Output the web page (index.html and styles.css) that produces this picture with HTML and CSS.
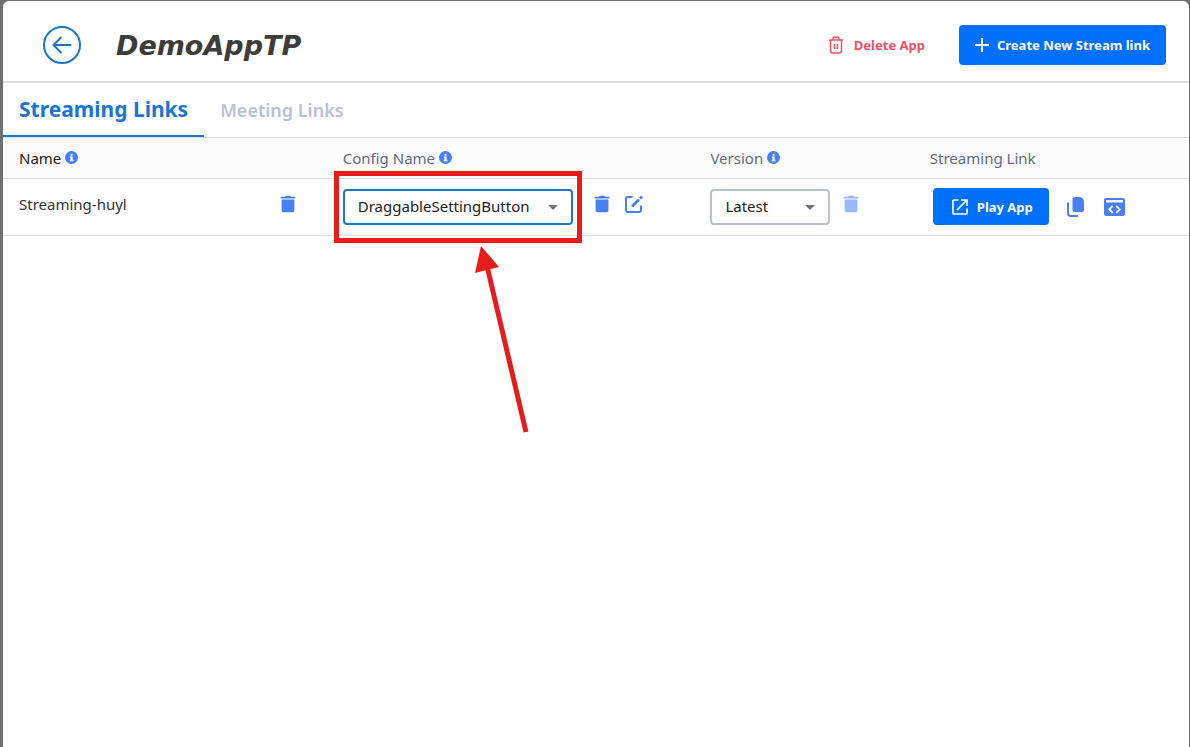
FILE: index.html
```html
<!DOCTYPE html>
<html lang="en">
<head>
  <meta charset="UTF-8" />
  <meta name="viewport" content="width=device-width, initial-scale=1">
  <title>DemoAppTP</title>
  <link rel="stylesheet" href="styles.css">
</head>
<body>
  <!-- shared icons -->
  <svg class="sprite" aria-hidden="true">
    <symbol id="info" viewBox="0 0 24 24">
      <path fill-rule="evenodd" d="M12 0a12 12 0 1 0 0 24a12 12 0 0 0 0-24zM10.3 5h3.6v3.6h-3.6zM9 10.3h5v6h1.5v2.4H8.6v-2.4h1.6v-3.6H9z"/>
    </symbol>
    <symbol id="trash" viewBox="0 0 24 24">
      <path d="M5 19c0 1.100.900 2 2 2h10c1.100 0 2-.9 2-2V7H5v12zM20 4h-4.500l-1-1h-5l-1 1H4v2h16V4z"/>
    </symbol>
  </svg>

  <div class="dialog">
    <header class="top">
      <button type="button" class="back" aria-label="Back">
        <svg width="38" height="38" viewBox="0 0 38 38" fill="none" stroke="currentColor" stroke-width="2" stroke-linecap="round" stroke-linejoin="round">
          <circle cx="19" cy="19" r="18"/>
          <path d="M27.500 19H10.500M18 11.500L10.500 19L18 26.500"/>
        </svg>
      </button>
      <h1>DemoAppTP</h1>
      <button type="button" class="delete-app">
        <svg width="16" height="18" viewBox="0 0 16 18" fill="none" stroke="currentColor" stroke-width="1.500">
          <path d="M1 4h14M5 4V2.500Q5 1 6.500 1h3Q11 1 11 2.500V4M2.500 4v10.500Q2.500 17 5 17h6q2.500 0 2.500-2.500V4M6.600 8v5M9.400 8v5"/>
        </svg>
        Delete App
      </button>
      <button type="button" class="primary create">
        <svg width="14" height="14" viewBox="0 0 14 14" fill="none" stroke="currentColor" stroke-width="2">
          <path d="M7 0v14M0 7h14"/>
        </svg>
        Create New Stream link
      </button>
    </header>

    <nav class="tabs">
      <a href="#streaming" class="tab active">Streaming Links</a>
      <a href="#meeting" class="tab">Meeting Links</a>
    </nav>

    <table class="links" id="streaming">
      <thead>
        <tr>
          <th class="col-name sorted"><span class="head">Name <svg class="info"><use href="#info"/></svg></span></th>
          <th class="col-config"><span class="head">Config Name <svg class="info"><use href="#info"/></svg></span></th>
          <th class="col-version"><span class="head">Version <svg class="info"><use href="#info"/></svg></span></th>
          <th><span class="head">Streaming Link</span></th>
        </tr>
      </thead>
      <tbody>
        <tr>
          <td>
            <div class="cell name-cell">
              <span>Streaming-huyl</span>
              <button type="button" class="icon" aria-label="Delete link"><svg width="22" height="24"><use href="#trash"/></svg></button>
            </div>
          </td>
          <td>
            <div class="cell">
              <div class="select config focused">
                <select aria-label="Config name">
                  <option>DraggableSettingButton</option>
                </select>
                <svg class="caret" viewBox="0 0 10 5"><path d="M0 0h10L5 5z"/></svg>
                <div class="highlight"></div>
                <svg class="arrow" width="54" height="188" viewBox="0 0 54 188">
                  <path d="M12 20L51 186" stroke="currentColor" stroke-width="5"/>
                  <path d="M6 0L24 21L0 27z" fill="currentColor"/>
                </svg>
              </div>
              <button type="button" class="icon trash-config" aria-label="Delete config"><svg width="22" height="24"><use href="#trash"/></svg></button>
              <button type="button" class="icon" aria-label="Edit config">
                <svg class="edit" width="18" height="18" viewBox="0 0 18 18" fill="none" stroke="currentColor" stroke-width="2">
                  <path d="M7.500 2H3Q1 2 1 4v11q0 2 2 2h11q2 0 2-2v-4.500"/>
                  <path d="M7 11.500L14 4.500M15 3.500L17 1.500" stroke-width="2.800"/>
                </svg>
              </button>
            </div>
          </td>
          <td>
            <div class="cell">
              <div class="select version">
                <select aria-label="Version">
                  <option>Latest</option>
                </select>
                <svg class="caret" viewBox="0 0 10 5"><path d="M0 0h10L5 5z"/></svg>
              </div>
              <button type="button" class="icon trash-version" aria-label="Delete version" disabled><svg width="22" height="24"><use href="#trash"/></svg></button>
            </div>
          </td>
          <td>
            <div class="cell link-cell">
              <button type="button" class="primary play">
                <svg width="16" height="16" viewBox="0 0 16 16" fill="none" stroke="currentColor" stroke-width="1.700">
                  <path d="M6.500 1H2Q1 1 1 2v12q0 1 1 1h12q1 0 1-1V9.500M9 1h6v6M15 1L5 11"/>
                </svg>
                Play App
              </button>
              <button type="button" class="icon copy" aria-label="Copy link">
                <svg width="18" height="20" viewBox="0 0 18 20">
                  <path d="M8 0h4.500Q17 .5 17 5v8q0 2-2 2H8q-2.500 0-2.500-2V2Q5.500 0 8 0z"/>
                  <path d="M1 5.500v10.700Q1 19 3.800 19H11" fill="none" stroke="currentColor" stroke-width="2"/>
                </svg>
              </button>
              <button type="button" class="icon" aria-label="Embed code">
                <svg width="21" height="18" viewBox="0 0 21 18">
                  <path fill-rule="evenodd" d="M2 0h17q2 0 2 2v14q0 2-2 2H2q-2 0-2-2V2Q0 0 2 0zM2 2v2.500h17V2z"/>
                  <path d="M8.700 8L5.300 11.400L8.700 14.800M12.300 8l3.400 3.400L12.300 14.800" fill="none" stroke="#fff" stroke-width="1.800"/>
                </svg>
              </button>
            </div>
          </td>
        </tr>
      </tbody>
    </table>
  </div>
</body>
</html>
```

FILE: styles.css
```css
:root {
  --blue: #1976d2;
  --primary: #0070ff;
  --icon: #4880f3;
  --line: #e0e0e0;
  --mark: #e81b1b;
}

* {
  box-sizing: border-box;
}

body {
  margin: 0;
  padding: 1px 1px 0 3px;
  background: #707070;
  font-family: "Noto Sans", sans-serif;
  font-size: 15px;
  color: #333;
}

.sprite {
  position: absolute;
  width: 0;
  height: 0;
}

.dialog {
  min-height: calc(100vh - 1px);
  background: #fff;
  border-radius: 6px 6px 0 0;
}

button, select {
  font: inherit;
}

button {
  display: flex;
  align-items: center;
  padding: 0;
  border: none;
  background: none;
  cursor: pointer;
}

/* header */
.top {
  display: flex;
  align-items: center;
  height: 82px;
  padding: 8px 23px 0 40px;
  border-bottom: 2px solid var(--line);
}

.back {
  color: var(--blue);
}

h1 {
  flex: 1;
  margin: 0 0 0 35px;
  font-family: "DejaVu Sans", sans-serif;
  font-size: 27px;
  font-style: italic;
  color: #3c3c3a;
}

.delete-app {
  gap: 10px;
  margin-right: 34px;
  font-size: 13px;
  font-weight: 700;
  color: #f44f64;
}

.primary {
  border-radius: 4px;
  background: var(--primary);
  color: #fff;
  font-size: 13px;
  font-weight: 700;
}

.create {
  gap: 8px;
  height: 40px;
  padding: 0 16px;
}

/* tabs */
.tabs {
  display: flex;
  height: 55px;
  border-bottom: 1px solid var(--line);
}

.tab {
  display: flex;
  align-items: center;
  padding: 0 16px;
  font-size: 18px;
  font-weight: 600;
  color: #bcc0d6;
  text-decoration: none;
}

.tab.active {
  font-size: 21px;
  font-weight: 700;
  color: var(--blue);
  border-bottom: 2px solid var(--blue);
}

/* table */
.links {
  width: 100%;
  table-layout: fixed;
  border-collapse: collapse;
}

.col-name {
  width: 27.3%;
}

.col-config {
  width: 31%;
}

.col-version {
  width: 18.5%;
}

th, td {
  padding: 0 16px;
  border-bottom: 1px solid var(--line);
  text-align: left;
}

th {
  height: 40px;
  background: #fcfcfc;
  font-weight: 400;
  color: #646b80;
}

th.sorted {
  color: #222;
}

td {
  height: 57px;
}

.head, .cell {
  display: flex;
  align-items: center;
}

.head {
  gap: 4px;
}

.info {
  width: 13px;
  height: 13px;
  fill: var(--icon);
}

.icon {
  color: var(--icon);
}

.icon svg {
  fill: currentColor;
}

.icon .edit {
  fill: none;
}

.icon:disabled {
  opacity: 0.55;
}

.name-cell {
  justify-content: space-between;
  padding: 0 12px 6px 0;
}

.select {
  position: relative;
  height: 36px;
}

.config {
  width: 230px;
}

.version {
  width: 120px;
}

.select select {
  width: 100%;
  height: 100%;
  padding: 0 32px 2px 13px;
  border: 2px solid #bcc0d0;
  border-radius: 4px;
  background: #fff;
  color: #222;
  appearance: none;
}

.focused select {
  border-color: var(--blue);
}

.caret {
  position: absolute;
  top: 16px;
  right: 15px;
  width: 10px;
  height: 5px;
  fill: #757575;
  pointer-events: none;
}

/* callout over the config select */
.highlight {
  position: absolute;
  inset: -18px -9px;
  border: 5px solid var(--mark);
  pointer-events: none;
}

.arrow {
  position: absolute;
  top: 57px;
  left: 132px;
  color: var(--mark);
  pointer-events: none;
}

.trash-config {
  margin: 0 12px 6px 18px;
}

.trash-config + .icon {
  margin-bottom: 6px;
}

.trash-version {
  margin: 0 0 6px 10px;
}

.link-cell {
  padding-left: 3px;
}

.play {
  gap: 9px;
  height: 37px;
  padding: 0 16px 0 19px;
}

.copy {
  margin: 0 19px 0 18px;
}
```
